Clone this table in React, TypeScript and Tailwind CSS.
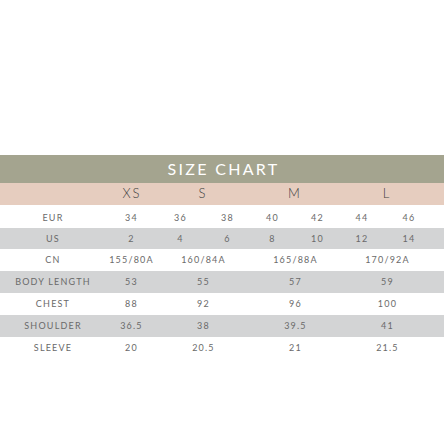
import React from 'react';

const cols = 'grid grid-cols-[106px_50px_48px_46px_44px_46px_43px_51px_1fr] items-center';

const eur = ['34', '36', '38', '40', '42', '44', '46'];
const us = ['2', '4', '6', '8', '10', '12', '14'];

const grouped = [
  { label: 'CN', vals: ['155/80A', '160/84A', '165/88A', '170/92A'], bg: 'bg-white' },
  { label: 'BODY LENGTH', vals: ['53', '55', '57', '59'], bg: 'bg-[#d3d4d5]' },
  { label: 'CHEST', vals: ['88', '92', '96', '100'], bg: 'bg-white' },
  { label: 'SHOULDER', vals: ['36.5', '38', '39.5', '41'], bg: 'bg-[#d3d4d5]' },
  { label: 'SLEEVE', vals: ['20', '20.5', '21', '21.5'], bg: 'bg-white' },
];

const spans = ['col-span-1', 'col-span-2', 'col-span-2', 'col-span-2'];

export default function App() {
  return (
    <div className="w-[444px] h-[444px] bg-white font-['Lato',sans-serif] text-[#6a6a6a]">
      <div className="h-[155px]" />

      {/* Title */}
      <div className="h-[28px] bg-[#a4a48f] flex items-center justify-center">
        <span className="text-white text-[16px] tracking-[2.3px] pl-[3px]">SIZE CHART</span>
      </div>

      {/* Size letters */}
      <div className={`${cols} h-[22px] bg-[#e6cdbf] text-[13px] font-light text-[#3f3f3f] tracking-[2px]`}>
        <div />
        <div className="text-center pl-[2px]">XS</div>
        <div className="col-span-2 text-center">S</div>
        <div className="col-span-2 text-center">M</div>
        <div className="col-span-2 text-center">L</div>
      </div>

      {/* EUR */}
      <div className={`${cols} h-[23px] bg-white text-[9px] tracking-[1.2px] pt-[2px]`}>
        <div className="text-center">EUR</div>
        {eur.map((v) => (
          <div key={v} className="text-center pl-[1px]">{v}</div>
        ))}
      </div>

      {/* US */}
      <div className={`${cols} h-[21px] bg-[#d3d4d5] text-[9px] tracking-[1.2px]`}>
        <div className="text-center">US</div>
        {us.map((v) => (
          <div key={v} className="text-center pl-[1px]">{v}</div>
        ))}
      </div>

      {grouped.map((row) => (
        <div key={row.label} className={`${cols} h-[22px] ${row.bg} text-[9px] tracking-[1.2px]`}>
          <div className="text-center">{row.label}</div>
          {row.vals.map((v, i) => (
            <div key={v} className={`${spans[i]} text-center pl-[1px]`}>{v}</div>
          ))}
        </div>
      ))}
    </div>
  );
}
